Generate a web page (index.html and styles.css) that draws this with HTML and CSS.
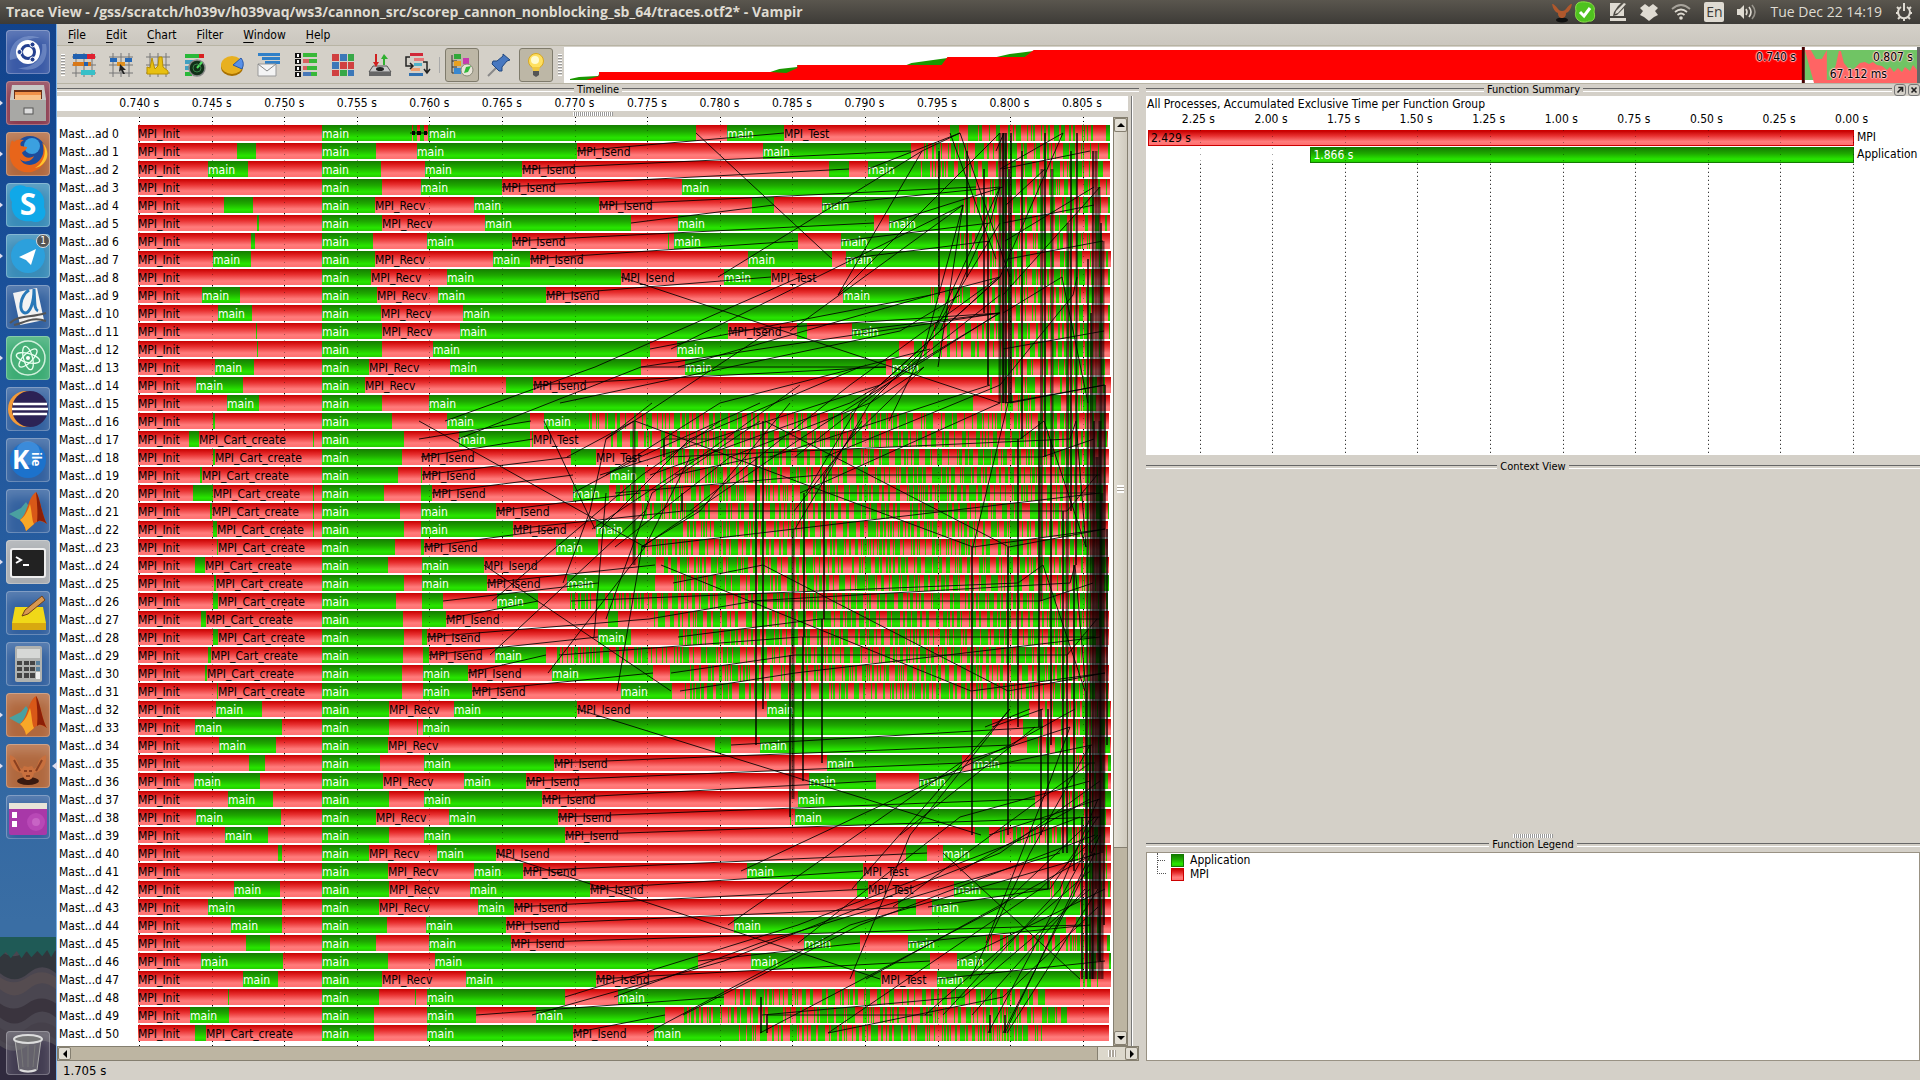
FILE: index.html
```html
<!DOCTYPE html>
<html lang="en">
<head>
<meta charset="utf-8">
<title>Trace View - Vampir</title>
<link rel="stylesheet" href="styles.css">
</head>
<body>
<header class="titlebar">
  <h1 class="title">Trace View - /gss/scratch/h039v/h039vaq/ws3/cannon_src/scorep_cannon_nonblocking_sb_64/traces.otf2* - Vampir</h1>
  <div class="tray">
    <svg class="tray-deer" viewBox="0 0 22 22"><ellipse cx="11" cy="19" rx="6" ry="2.500" fill="#111"/><path d="M1 3c2 0 4 2 6 5 1 1 2 2 4 2s3-1 4-2c2-3 4-5 6-5-1 5-3 8-6 9 0 4-2 5-4 5s-4-1-4-5c-3-1-5-4-6-9z" fill="#b0582c"/></svg>
    <svg class="tray-skype" viewBox="0 0 22 22"><path d="M4 2c3-2 9-1 12 0 4 2 5 5 4 9 2 6-1 10-5 9-4 2-9 1-11-1-3-3-3-6-2-9C1 6 2 3 4 2z" fill="#4fc21f" stroke="#8be04a"/><path d="M6 11l4 4 6-8" fill="none" stroke="#fff" stroke-width="3"/></svg>
    <svg class="tray-icon" viewBox="0 0 18 18"><path d="M1 0h11l-3 3-4 6-1 4 4-1 7-7v8H1zM15 0l2 1-8 9-3 1 1-3zM1 15h16v3H1z" fill="#dfdbd2"/></svg>
    <svg class="tray-icon" viewBox="0 0 18 18"><path d="M5 1l4 3 4-3 5 4-3 3 3 4-4 2-5 4-5-4-4-2 3-4-3-3z" fill="#dfdbd2"/></svg>
    <svg class="tray-icon wide" viewBox="0 0 20 18"><g fill="none" stroke="#dfdbd2" stroke-width="1.800"><path d="M1 6q9-8 18 0" opacity=".6"/><path d="M4 9q6-5 12 0"/><path d="M6.500 12q3.500-3 7 0"/></g><circle cx="10" cy="15" r="1.800" fill="#dfdbd2"/></svg>
    <span class="lang">En</span>
    <svg class="tray-icon wide" viewBox="0 0 20 18"><path d="M0 6h3l4-4v14l-4-4H0z" fill="#dfdbd2"/><g fill="none" stroke="#dfdbd2" stroke-width="1.600"><path d="M9 6q2 3 0 6"/><path d="M12 4q4 5 0 10"/><path d="M15 2q6 7 0 14" opacity=".5"/></g></svg>
    <time class="clock">Tue Dec 22 14:19</time>
    <svg class="tray-icon" viewBox="0 0 18 18"><g fill="none" stroke="#dfdbd2" stroke-width="2"><path d="M6 4a6 6 0 1 0 6 0"/><path d="M9 0v8M1 10h2M15 10h2M3 16l2-2M15 16l-2-2M9 16v2M2 4l2 2M16 4l-2 2"/></g></svg>
  </div>
</header>

<div class="desktop">
<nav class="launcher" aria-label="Launcher">
  <button class="tile navy" aria-label="Dash"><svg viewBox="0 0 44 44"><path d="M4 30C2 10 20 2 34 8c-12-1-24 6-22 20M40 14c4 20-12 30-28 24 16 0 26-10 24-24" fill="#8ea6d6" opacity=".5"/><circle cx="22" cy="22" r="12" fill="#fff"/><circle cx="22" cy="22" r="6.500" fill="none" stroke="#24408f" stroke-width="3"/><g fill="#24408f" stroke="#fff"><circle cx="13.500" cy="22" r="2.500"/><circle cx="26.500" cy="14.500" r="2.500"/><circle cx="26.500" cy="29.500" r="2.500"/></g></svg></button>
  <button class="tile wine run" aria-label="Files"><svg viewBox="0 0 44 44"><path d="M6 4h32l2 14v22H4V18z" fill="#c9c9c6"/><path d="M8 9h28v9H8z" fill="#6b3018"/><path d="M9 11h26v3H9z" fill="#f09048"/><path d="M9 14h26v5H9z" fill="#f8c088"/><path d="M4 19h36v21H4z" fill="#a8a8a5"/><rect x="18" y="27" width="9" height="6" fill="#ddd" stroke="#555"/></svg></button>
  <button class="tile tan run" aria-label="Firefox"><svg viewBox="0 0 44 44"><circle cx="24" cy="20" r="16" fill="#1d4c9c"/><circle cx="26" cy="14" r="8" fill="#3ba0e0"/><path d="M5 10c1-2 2-2 3 0 3-3 6-3 10-2-4 2-4 4-3 6l6 1c0 3-4 4-5 6 2 5 8 6 12 3-2 6-11 7-14 3 4 9 19 8 23-5 1-5 0-9-1-12 5 6 6 15 2 21-5 9-19 13-28 5C2 30 3 18 5 10z" fill="#e8651a"/><path d="M37 11c4 9 1 20-8 25 11-2 17-14 8-25z" fill="#ffc52e"/></svg></button>
  <button class="tile teal run" aria-label="Skype"><svg viewBox="0 0 44 44"><path d="M6 6c4-5 12-4 14-2 13 0 20 8 18 20 5 10-4 18-13 14C12 40 4 30 6 19 3 14 3 9 6 6z" fill="#10a8e8"/><text x="22" y="32" class="glyph-s">S</text></svg></button>
  <button class="tile teal run" aria-label="Telegram"><svg viewBox="0 0 44 44"><circle cx="22" cy="22" r="17" fill="#2ca0dc"/><path d="M13 23l17-8-5 16-5-5z" fill="#fff"/></svg><span class="badge">1</span></button>
  <button class="tile blue" aria-label="Xournal"><svg viewBox="0 0 44 44"><path d="M7 8l24-5 7 32-24 5z" fill="#f2f2f2"/><path d="M23 5c-9 6-11 22-4 23 5 0 9-10 9-24 1 14 0 20 4 22" fill="none" stroke="#2878b8" stroke-width="3"/><path d="M4 38c8-8 20-5 36-10M8 40c10-2 18-9 32-4" fill="none" stroke="#555" stroke-width="2"/></svg></button>
  <button class="tile green run" aria-label="Atom"><svg viewBox="0 0 44 44"><circle cx="22" cy="22" r="17" fill="#48b078" stroke="#d0f0dc" stroke-width="1.500"/><g fill="none" stroke="#e8fff0" stroke-width="1.300"><ellipse cx="22" cy="22" rx="12" ry="4.500" transform="rotate(15 22 22)"/><ellipse cx="22" cy="22" rx="12" ry="4.500" transform="rotate(75 22 22)"/><ellipse cx="22" cy="22" rx="12" ry="4.500" transform="rotate(135 22 22)"/></g><circle cx="22" cy="22" r="2" fill="#fff"/></svg></button>
  <button class="tile blue" aria-label="Eclipse"><svg viewBox="0 0 44 44"><circle cx="20" cy="22" r="18" fill="#f39a38"/><circle cx="24" cy="22" r="18" fill="#2c2255"/><path d="M7 17h34M6 22h36M7 27h34" stroke="#fff" stroke-width="2.500"/></svg></button>
  <button class="tile blue" aria-label="Kile"><svg viewBox="0 0 44 44"><circle cx="22" cy="22" r="18" fill="#1c72cc"/><circle cx="22" cy="15" r="12" fill="#5aa4e8" opacity=".5"/><text x="6" y="31" class="glyph-k">K</text><text x="14" y="-26" class="glyph-ile" transform="rotate(90)">ile</text></svg></button>
  <button class="tile blue" aria-label="MATLAB"><svg viewBox="0 0 44 44"><use href="#matlab"/></svg></button>
  <button class="tile silver run" aria-label="Terminal"><svg viewBox="0 0 44 44"><rect x="5" y="9" width="34" height="28" rx="2" fill="#222" stroke="#eee" stroke-width="2"/><path d="M10 17l5 3-5 3M17 25h6" fill="none" stroke="#fff" stroke-width="2"/></svg></button>
  <button class="tile blue" aria-label="Notes"><svg viewBox="0 0 44 44"><path d="M9 16h28l3 16v7H6v-7z" fill="#f0d818"/><path d="M6 32h34v7H6z" fill="#d8a810"/><path d="M16 25l3-6L36 5l3 4-17 14z" fill="#d89850" stroke="#704018"/></svg></button>
  <button class="tile blue" aria-label="Calculator"><svg viewBox="0 0 44 44"><rect x="9" y="4" width="27" height="36" rx="2" fill="#b0b2b0"/><rect x="11" y="7" width="23" height="9" fill="#d6d8d6"/><path d="M11 19h5v4h-5zM18 19h5v4h-5zM24 19h5v4h-5zM11 25h5v4h-5zM18 25h5v4h-5zM24 25h5v4h-5zM11 31h5v5h-5zM18 31h5v5h-5zM24 31h5v5h-5z" fill="#444"/><path d="M30 19h4v4h-4zM30 25h4v4h-4z" fill="#58809c"/><path d="M30 30h4v7h-4z" fill="#eee"/></svg></button>
  <button class="tile tan run" aria-label="MATLAB session"><svg viewBox="0 0 44 44"><use href="#matlab"/></svg></button>
  <button class="tile tan run active" aria-label="Vampir"><svg viewBox="0 0 44 44"><ellipse cx="22" cy="37" rx="11" ry="4" fill="#3a1a10"/><path d="M4 11c6 2 8 7 9 12l3 2 2-3 4 1 4-1 2 3 3-2c1-5 3-10 9-12 1 8-2 16-12 18-1 5-3 7-6 7s-5-2-6-7C6 27 3 19 4 11z" fill="#c8703e"/><path d="M8 16l6 11M36 16l-6 11M18 27h3M23 27h3M20 32h4" stroke="#8a4020" stroke-width="2"/></svg></button>
  <button class="tile blue" aria-label="Workspace"><svg viewBox="0 0 44 44"><rect x="3" y="9" width="38" height="31" rx="2" fill="#a838a8"/><circle cx="30" cy="27" r="9" fill="#c858c4" opacity=".5"/><circle cx="30" cy="27" r="4" fill="#d880d4" opacity=".5"/><path d="M3 8h38v6H3z" fill="#e8e4d8"/><path d="M6 17h5v6H6zM6 26h5v6H6z" fill="#fff"/></svg></button>
  <div class="terrain">
    <svg class="hills" viewBox="0 0 57 143" preserveAspectRatio="none"><path fill="#4a4650" d="M0 0h57v143H0z"/><path fill="#32363c" d="M0 14q14 10 28 0t29 0v22q-14-12-28 0T0 36z"/><path fill="#554c50" d="M0 40q14 10 28 0t29 0v12q-14-12-28 0T0 52z"/><path fill="#3a343e" d="M0 66q14 10 28 0t29 0v14q-14-12-28 0T0 80z"/><path fill="#45404a" d="M0 90q14 10 28 0t29 0v12q-14-12-28 0t-29 0z"/><path fill="#302a3e" d="M0 108q14 10 28 0t29 0v35H0z"/><path fill="#1f5a56" d="M0 0h57v12l-5 8-4-7-5 6-5-5-6 6-5-6-5 7-5-7-6 7-5-6-6 5z"/></svg>
    <button class="tile clear" aria-label="Trash"><svg viewBox="0 0 44 44"><path d="M9 9l4 30q9 4 18 0l4-30" fill="#888" fill-opacity=".5" stroke="#aaa"/><path d="M15 14l2 22M22 14v22M29 14l-2 22" stroke="#777"/><ellipse cx="22" cy="8" rx="14" ry="4" fill="#777" stroke="#ddd" stroke-width="2"/><path d="M14 39q8 3 16 0" stroke="#ddd" stroke-width="2" fill="none"/></svg></button>
  </div>
</nav>

<main class="app">
  <nav class="menubar">
    <button class="menu"><u>F</u>ile</button><button class="menu"><u>E</u>dit</button><button class="menu"><u>C</u>hart</button><button class="menu"><u>F</u>ilter</button><button class="menu"><u>W</u>indow</button><button class="menu"><u>H</u>elp</button>
  </nav>
  <div class="toolbar">
    <span class="grip"></span>
    <div class="tools">
      <button class="tool" aria-label="Master timeline"><svg viewBox="0 0 24 24"><use href="#grid"/><path fill="#2060b0" d="M1 1h14v5H1z"/><path fill="#e02030" d="M15 1h8v5h-8z"/><path fill="#d87818" d="M1 9h18v4H1z"/><path fill="#2060b0" d="M12 9h4v4h-4z"/><path fill="#38c0c8" d="M9 17h14v5H9z"/></svg></button>
      <button class="tool" aria-label="Process timeline"><svg viewBox="0 0 24 24"><use href="#grid"/><path fill="#2468b8" d="M1 5h7v4H1zM16 5h7v4h-7z"/><path fill="#e09020" d="M8 9h8v4H8z"/><path fill="#222" d="M11 11l6 6-3 0 2 4-2 0-2-4-2 2z"/></svg></button>
      <button class="tool" aria-label="Counter timeline"><svg viewBox="0 0 24 24"><use href="#grid"/><path fill="#e8c010" stroke="#b89000" d="M1 21V14l3 1 2-10 2 8 1 3 3-3 1-9 3 0 1 10 5 4v3z"/></svg></button>
      <button class="tool" aria-label="Performance radar"><svg viewBox="0 0 24 24"><path fill="#28b838" d="M2 1h16v4H2z"/><path fill="#d82020" d="M16 1h5v4h-5z"/><path fill="#40a0c0" d="M2 7h8v4H2zM2 13h6v4H2z"/><path fill="#28b838" d="M2 19h7v4H2z"/><circle cx="14" cy="15" r="8" fill="#123018" stroke="#888" stroke-width="1.500"/><path d="M14 15l5-6" stroke="#50e060" stroke-width="2"/><circle cx="14" cy="15" r="4" fill="none" stroke="#3a8048"/></svg></button>
      <button class="tool" aria-label="Function summary"><svg viewBox="0 0 24 24"><ellipse cx="12" cy="14" rx="11" ry="9" fill="#a87000"/><ellipse cx="12" cy="12" rx="11" ry="9" fill="#e8b020"/><path d="M13 12l8-7q4 5 1 11z" fill="#5890e8" stroke="#2858a8"/></svg></button>
      <button class="tool" aria-label="Message summary"><svg viewBox="0 0 24 24"><path fill="#3080c8" d="M1 0h22v3H1zM5 4h18v3H5zM8 8h15v3H8z"/><path fill="#f4f4f4" stroke="#999" d="M1 11h18v12H1z"/><path d="M1 11l9 7 9-7" fill="none" stroke="#888"/></svg></button>
      <button class="tool" aria-label="Process summary"><svg viewBox="0 0 24 24"><path fill="#111" d="M1 0h6v5H1zM1 6h6v5H1zM1 13h6v5H1zM1 19h6v5H1z"/><path stroke="#fff" stroke-width="2" d="M4 1v3M4 7v3M4 14v3M4 20v3"/><path fill="#38b838" d="M9 0h14v4H9zM15 6h8v4h-8zM13 13h10v4H13zM17 19h6v4h-6z"/><path fill="#d86060" d="M9 6h6v4H9zM9 13h4v4H9z"/><path fill="#4878b8" d="M9 19h8v4H9z"/></svg></button>
      <button class="tool" aria-label="Communication matrix"><svg viewBox="0 0 24 24"><path fill="#d04040" d="M1 1h7v7H1zM9 9h7v7H9zM17 9h6v7h-6zM1 17h7v6H1z"/><path fill="#3c78b8" d="M9 1h7v7H9zM1 9h7v7H1zM17 17h6v6h-6z"/><path fill="#38a848" d="M17 1h6v7h-6zM9 17h7v6H9z"/></svg></button>
      <button class="tool" aria-label="I/O summary"><svg viewBox="0 0 24 24"><path fill="#c8c8c8" stroke="#555" d="M5 13h14l4 6H1z"/><path fill="#666" d="M1 19h22v4H1z"/><path fill="#d02020" d="M7 1h2v8h2l-3 5-3-5h2z"/><path fill="#30b030" d="M17 12h-2V6h-2l3-5 4 5h-3z"/><ellipse cx="12" cy="16" rx="4" ry="2" fill="#222"/></svg></button>
      <button class="tool" aria-label="Call tree"><svg viewBox="0 0 24 24"><path fill="#d02838" d="M5 0h13v3H5z"/><path fill="#e87878" d="M9 5h10v3H9z"/><path fill="#50b0c8" d="M9 10h8v3H9z"/><path fill="#f0a070" d="M6 15h9v3H6z"/><path fill="#3070b0" d="M4 20h14v3H4z"/><path d="M5 4H1v9h6M5 10l3 3-3 3M18 9h4v10M19 16l3 4 3-4" fill="none" stroke="#222" stroke-width="1.500"/></svg></button>
    </div>
    <span class="sep"></span>
    <div class="tools">
      <button class="tool on" aria-label="Color by function"><svg viewBox="0 0 24 24"><path d="M2 2v18h5M2 8h5M2 14h5" fill="none" stroke="#333"/><path fill="#30a838" d="M4 1h7v5H4z"/><path fill="#e8a020" d="M4 8h7v5H4z"/><path fill="#3888d0" d="M4 15h7v6H4z"/><path fill="#c838b0" d="M13 5h6v6h-6z"/><circle cx="17" cy="17" r="6" fill="#e8e4d8" stroke="#887"/><path fill="#30b838" d="M14 20l2-6 5-1-3 6z"/></svg></button>
      <button class="tool" aria-label="Pin"><svg viewBox="0 0 24 24"><path d="M10 14L1 23" stroke="#888" stroke-width="2"/><path fill="#4878c0" stroke="#204880" d="M16 1l7 6-3 1-5 6v4l-3 0-7-7 1-3 4 0 6-5z"/></svg></button>
      <button class="tool on" aria-label="Highlight"><svg viewBox="0 0 24 24"><circle cx="12" cy="8" r="7.500" fill="#ffe060" stroke="#d8a820"/><circle cx="11" cy="7" r="4" fill="#fffbd0"/><path fill="#f0c840" d="M8 14h8l-1 4H9z"/><path fill="#555" d="M9 18h6v4l-3 2-3-2z"/></svg></button>
    </div>
    <span class="grip"></span>
    <div class="overview">
      <svg class="overview-plot" viewBox="0 0 1354 36" preserveAspectRatio="none">
        <path fill="#1a9600" d="M6 33V32L15 30 34 29 36 25H206L215 22 233 20 233 18H342L347 16 383 11V10H432L445 7 469 4V33z"/>
        <path fill="#f00" d="M22 33L35 29V25H206L222 26 233 21V18H377L383 10H460L469 3H1237V33z"/>
        <path fill="#70c464" d="M1239 3h113v30h-113z"/>
        <path fill="#ff6464" d="M1239 3h6l5 9h6l5-9v30h5v-5l4-10 3-14 2 0 3 12 5 6h5l6-6 5-1 4 2 4-2 4 3 5 1 5 4 3-3 4 5 4-4 4 4 3-5 5 4 3-6 4 5 3-4 4 4v16h-109z"/>
        <path fill="#400" d="M1236 0h3v36h-3z"/><path fill="#666" d="M1351 0h3v36h-3z"/>
      </svg>
      <span class="ov ov-start">0.740 s</span><span class="ov ov-end">0.807 s</span><span class="ov ov-span">67.112 ms</span>
    </div>
  </div>

  <div class="docks">
    <section class="dock-left">
      <h2 class="dock-title">Timeline</h2>
      <div class="timeline-body">
        <div class="ruler"><div class="ruler-scale" id="ruler"></div></div>
        <div class="splitter"><span class="split-grip"></span></div>
        <div class="chart-row">
          <div class="chart" id="chart">
            <div class="labels" id="labels"></div>
            <div class="tracks">
              <svg class="layer" id="grid-under" viewBox="0 0 973 929" preserveAspectRatio="none"></svg>
              <div class="bars" id="bars"></div>
              <svg class="layer over" id="messages" viewBox="0 0 973 929" preserveAspectRatio="none"></svg>
            </div>
          </div>
          <div class="vscroll"><button class="sb up" aria-label="Scroll up"></button><div class="vthumb"><span class="ridges"></span></div><div class="vrest"></div><button class="sb down" aria-label="Scroll down"></button></div>
        </div>
      </div>
      <div class="hscroll"><button class="sb left" aria-label="Scroll left"></button><div class="hrest"></div><div class="hthumb"><span class="ridges vert"></span></div><button class="sb right" aria-label="Scroll right"></button></div>
    </section>

    <section class="dock-right">
      <div class="title-wrap"><h2 class="dock-title">Function Summary</h2>
        <button class="dock-btn" aria-label="Undock"><svg viewBox="0 0 12 12"><path d="M4 3h5v5M9 3L3 9" fill="none" stroke="#222" stroke-width="2"/></svg></button>
        <button class="dock-btn" aria-label="Close"><svg viewBox="0 0 12 12"><path d="M3 3l6 6M9 3l-6 6" stroke="#222" stroke-width="2"/></svg></button></div>
      <div class="summary">
        <p class="summary-head">All Processes, Accumulated Exclusive Time per Function Group</p>
        <div class="summary-plot">
          <div class="summary-main">
            <div class="summary-scale" id="sumscale"></div>
            <div class="summary-bars">
              <div class="sumbar mpi">2.429 s</div>
              <div class="sumbar appl">1.866 s</div>
              <svg class="layer" id="sumgrid" viewBox="0 0 706 327" preserveAspectRatio="none"></svg>
            </div>
          </div>
          <div class="summary-names"><span>MPI</span><span>Application</span></div>
        </div>
      </div>
      <h2 class="dock-title context-title">Context View</h2>
      <div class="context"></div>
      <div class="legend-split"><span class="split-grip"></span></div>
      <h2 class="dock-title">Function Legend</h2>
      <ul class="legend">
        <li><span class="twig"></span><span class="swatch appl"></span>Application</li>
        <li><span class="twig last"></span><span class="swatch mpi"></span>MPI</li>
      </ul>
    </section>
  </div>
  <footer class="status">1.705 s</footer>
</main>
</div>

<svg class="defs" aria-hidden="true">
  <symbol id="grid" viewBox="0 0 24 24"><path d="M4 0v24M12 0v24M20 0v24M0 4h24M0 12h24M0 20h24" stroke="#777" fill="none"/></symbol>
  <symbol id="matlab" viewBox="0 0 44 44"><path d="M3 25l12-6 5-6 4 6-7 13-5-2z" fill="#4aa0a0"/><path d="M14 31C22 24 22 8 30 3c4 5 6 24 11 32-6-4-9-4-13 0l-8 7c-1-5-3-8-6-11z" fill="#d85818"/><path d="M30 3c4 5 6 24 11 32-5-4-8-4-10-2 1-10 0-20-1-30z" fill="#8c2008"/><path d="M20 42c-1-5-3-8-6-11 5-3 8-10 10-16 2 8 2 17 4 20z" fill="#f8a828"/></symbol>
</svg>
<script src="app.js"></script>
</body>
</html>
```
FILE: styles.css
```css
* { box-sizing: border-box; }
body {
  margin: 0; min-height: 100vh; display: flex; flex-direction: column;
  background: #d4d0c8; color: #000; overflow-x: hidden;
  font: 12px/16px "DejaVu Sans Condensed", "DejaVu Sans", "Noto Sans", sans-serif;
}
button { padding: 0; border: 0; background: none; font: inherit; color: inherit; }
h1, h2, p, ul { margin: 0; padding: 0; font-weight: normal; }
svg { display: block; }
.defs { position: absolute; width: 0; height: 0; }

/* Desktop top bar */
.titlebar { height: 24px; padding: 0 7px 0 6px; display: flex; align-items: center; justify-content: space-between; background: linear-gradient(#5a564e, #3d3b37); color: #dfdbd2; }
.title { font: bold 14px/24px "Open Sans", "Noto Sans", sans-serif; white-space: nowrap; }
.tray { display: flex; align-items: center; gap: 13px; }
.tray-deer, .tray-skype { width: 22px; height: 22px; }
.tray-skype { margin-left: -12px; }
.tray-icon { width: 18px; height: 18px; }
.tray-icon.wide { width: 20px; }
.lang { width: 20px; height: 20px; border-radius: 2px; background: #dfdbd2; color: #3d3b37; text-align: center; font: 14px/20px "Open Sans", sans-serif; }
.clock { font: 14px/24px "Open Sans", "Noto Sans", sans-serif; }

.desktop { flex: 1; display: flex; }

/* Launcher */
.launcher { flex: none; width: 57px; padding: 6px 7px 0 6px; display: flex; flex-direction: column; gap: 7px; border-right: 1px solid #7db4ea; background: linear-gradient(#12438c, #1c539c 30%, #3a6ea4 85%); }
.tile { position: relative; flex: none; width: 44px; height: 44px; border-radius: 4px; box-shadow: inset 0 0 0 1px rgba(255,255,255,.25), inset 0 8px 12px rgba(255,255,255,.2); }
.navy { background: #3a5aa6; } .wine { background: #8c3c50; } .tan { background: #b0683e; }
.teal { background: #3a8cb8; } .blue { background: #33619f; } .green { background: #3cac74; }
.silver { background: #a8acb0; }
.run::before { content: ""; position: absolute; left: -8px; top: 18px; border: 4px solid transparent; border-left: 5px solid #dde; }
.active::after { content: ""; position: absolute; right: -7px; top: 18px; border: 4px solid transparent; border-right: 5px solid #dde; }
.badge { position: absolute; right: 0; top: 0; width: 14px; height: 14px; border-radius: 7px; border: 1px solid #ddd; background: #555; color: #fff; font-size: 10px; line-height: 12px; text-align: center; }
.glyph-s { font: bold 30px "Open Sans", sans-serif; fill: #fff; text-anchor: middle; }
.glyph-k { font: bold 26px "Open Sans", sans-serif; fill: #fff; }
.glyph-ile { font: bold 12px "Open Sans", sans-serif; fill: #fff; }
.terrain { position: relative; margin: auto -7px 0 -6px; height: 144px; padding: 94px 6px 0; }
.hills { position: absolute; inset: 0; width: 100%; height: 100%; }
.clear { background: rgba(200,200,220,.12); }

/* Menus and toolbar */
.app { flex: 1; min-width: 0; display: flex; flex-direction: column; }
.menubar { height: 22px; padding-left: 1px; display: flex; border-bottom: 1px solid #b8b4a4; background: linear-gradient(#d4d0c8, #cbc7bf); }
.menu { padding: 0 10px; line-height: 23px; }
.menu u { text-underline-offset: 3px; }
.toolbar { height: 38px; padding-left: 4px; display: flex; align-items: center; gap: 5px; border-bottom: 1px solid #b8b4a4; }
.grip { flex: none; width: 4px; height: 22px; margin-right: -3px; background: repeating-linear-gradient(#fff 0 1px, #999 1px 2px, #d4d0c8 2px 3px); }
.tools { display: flex; gap: 3px; }
.tool { width: 34px; height: 34px; padding: 5px; }
.tool svg { width: 24px; height: 24px; overflow: visible; }
.tool.on { padding: 4px; border: 1px solid #7f7b6c; border-radius: 3px; background: #bdb7a6; }
.sep { width: 1px; height: 16px; background: #fff; border-left: 1px solid #aaa; }
.overview { position: relative; flex: 1; height: 36px; background: #fff; }
.overview-plot { width: 100%; height: 36px; }
.ov { position: absolute; line-height: 14px; text-shadow: 1px 0 1px #fcc, -1px 0 1px #fcc, 0 1px 1px #fcc, 0 -1px 1px #fcc; }
.ov-start { right: 124px; top: 3px; } .ov-end { right: 7px; top: 3px; } .ov-span { right: 33px; top: 20px; }

/* Docks */
.docks { flex: 1; display: flex; gap: 7px; }
.dock-left { flex: 1082 1 0; min-width: 0; display: flex; flex-direction: column; }
.dock-right { flex: 774 1 0; min-width: 0; display: flex; flex-direction: column; }
.dock-title { height: 12px; display: flex; align-items: center; gap: 3px; font-size: 11px; line-height: 12px; white-space: nowrap; }
.dock-title::before, .dock-title::after { content: ""; flex: 1; height: 2px; border-top: 1px solid #666; border-bottom: 1px solid #fff; }
.title-wrap { display: flex; align-items: center; gap: 2px; }
.title-wrap .dock-title { flex: 1; }
.title-wrap .dock-title::before { flex: 1 1 29px; }
.dock-btn { width: 12px; height: 12px; border: 1px solid #777; border-radius: 3px; }
.dock-btn svg { width: 10px; height: 10px; }

.timeline-body { margin-right: 7px; padding-right: 3px; border-right: 1px solid #777; box-shadow: 1px 0 #fff; }
.ruler { height: 15px; padding: 0 17px 0 81px; background: #fff; }
.ruler-scale { display: flex; margin-left: -35px; }
.ruler-scale span { flex: none; text-align: center; line-height: 14px; background: linear-gradient(#000, #000) 50% 13px / 1px 2px no-repeat; }
.splitter { height: 6px; display: flex; justify-content: center; align-items: center; }
.split-grip { width: 40px; height: 4px; background: repeating-linear-gradient(90deg, #fff 0 1px, #999 1px 2px); }
.chart-row { display: flex; }
.chart { flex: 1; display: flex; padding-right: 2px; background: #fff; }
.labels { flex: none; width: 81px; padding: 7px 0 4px 2px; }
.labels div { height: 18px; line-height: 20px; white-space: nowrap; }
.tracks { position: relative; flex: 1; min-width: 0; }
.layer { position: absolute; inset: 0; width: 100%; height: 100%; pointer-events: none; }
.bars { position: relative; padding: 7px 0 4px; }
.track { height: 18px; padding: 1px 0; display: flex; line-height: 18px; white-space: nowrap; }
.track span { flex: none; height: 16px; }
.r, .mpi { background: linear-gradient(#c80000, #e83030 35%, #ff7c7c 75%, #ff7070); }
.g, .appl { background: linear-gradient(#147d00, #1ea800 40%, #28e600 80%, #22cc00); color: #fff; }
.layer line, .layer path { vector-effect: non-scaling-stroke; fill: none; stroke: #000; }
.layer .tick { stroke-dasharray: 1 3; }
.layer .faint { stroke-dasharray: 1 5; opacity: .35; }
.layer .msg { opacity: .85; }
.layer .v { opacity: .7; stroke-width: 2px; }
.layer .thick { opacity: .55; stroke-width: 3px; }
.layer .arrow { stroke-width: 4px; }

/* Scroll bars */
.vscroll { width: 15px; display: flex; flex-direction: column; background: #bdb5a2; border: 1px solid #857f70; }
.sb { flex: none; width: 13px; height: 14px; background: #e2ded4; border: 1px solid #857f70; border-radius: 2px; display: grid; place-items: center; }
.sb::before { content: ""; border: 4px solid transparent; }
.up::before { border-bottom-color: #000; margin-top: -4px; }
.down::before { border-top-color: #000; margin-bottom: -4px; }
.left::before { border-right-color: #000; margin-left: -4px; }
.right::before { border-left-color: #000; margin-right: -4px; }
.vthumb { flex: 718 1 0; display: grid; place-items: center; background: linear-gradient(90deg, #e4e0d6, #cfcabd); border-bottom: 1px solid #857f70; }
.vrest { flex: 184 1 0; }
.ridges { width: 7px; height: 8px; background: repeating-linear-gradient(#fff 0 2px, #aaa49a 2px 3px); }
.ridges.vert { width: 8px; height: 7px; background: repeating-linear-gradient(90deg, #fff 0 1px, #aaa49a 1px 3px); }
.hscroll { height: 15px; display: flex; background: #bdb5a2; border: 1px solid #857f70; }
.hscroll .sb { height: 13px; }
.hrest { flex: 1; }
.hthumb { width: 28px; display: grid; place-items: center; background: #dcd8cc; border-left: 1px solid #857f70; }

/* Function summary */
.summary { background: #fff; display: flex; flex-direction: column; }
.summary-head { padding-left: 1px; height: 15px; line-height: 16px; }
.summary-plot { display: flex; padding-left: 2px; }
.summary-main { flex: 706 1 0; min-width: 0; }
.summary-scale { height: 19px; display: flex; margin-left: 2%; }
.summary-scale span { flex: none; text-align: center; line-height: 16px; }
.summary-bars { position: relative; height: 325px; display: flex; flex-direction: column; gap: 1px; align-items: flex-end; }
.sumbar { height: 16px; line-height: 14px; padding-left: 2px; border: 1px solid #c00; }
.sumbar.mpi { width: 100%; }
.sumbar.appl { width: 77%; border-color: #127a00; }
.summary-names { flex: 63 1 0; min-width: 0; padding: 18px 0 0 3px; display: flex; flex-direction: column; gap: 1px; white-space: nowrap; }
.context-title { margin-top: 6px; }
.context { flex: 1; }
.legend-split { height: 6px; display: flex; justify-content: center; align-items: center; }
.legend { height: 209px; margin-top: 1px; padding: 0 0 0 10px; list-style: none; background: #fff; border: 1px solid #999284; }
.legend li { height: 14px; display: flex; align-items: center; line-height: 14px; }
.twig { position: relative; width: 9px; height: 14px; border-left: 1px dotted #555; background: repeating-linear-gradient(90deg, #555 0 1px, transparent 1px 2px) 0 7px / 100% 1px no-repeat; }
.twig.last { height: 7px; align-self: flex-start; border-bottom: 1px dotted #555; background: none; }
.swatch { width: 13px; height: 13px; margin: 0 6px 0 5px; border: 1px solid #127a00; }
.swatch.mpi { border-color: #c00; }

.status { height: 20px; padding-left: 6px; line-height: 20px; font-size: 13px; }
```
FILE: app.js
```js
// Each row lists "<start><kind>" tokens. r = MPI, g = application, d = rapid alternation.
// m = labelled main, i = MPI_Isend, v = MPI_Recv, t = MPI_Test, c = MPI_Cart_create.
var START = 138, END = 1111, WIDTH = END - START;
var NAMES = { m: 'main', i: 'MPI_Isend', v: 'MPI_Recv', t: 'MPI_Test', c: 'MPI_Cart_create', n: 'MPI_Init' };
var ROWS = [
  '322m 411d 429m 696r 727m 784t 950g 959r 968g 975d',
  '237g 256r 322m 376r 417m 577i 763m 911r 922d',
  '208m 248r 322m 381r 425m 522i 829g 849r 868m 919d',
  '322m 382r 421m 502i 682m 976r 985d',
  '224g 253r 322m 375v 474m 599i 752g 774r 822m 962d',
  '257g 259r 322m 382v 485m 631r 678m 874r 889m 982d',
  '251g 255r 322m 373r 427m 512i 668g 669r 674m 798r 841m 954d',
  '213m 251r 322m 375v 493m 530i 748m 832r 846m 978r 984d',
  '322m 371v 447m 621i 724m 771t 990d',
  '202m 240r 322m 377v 438m 546i 843m 931d',
  '218m 252r 322m 381v 463m 948r 990d',
  '256g 257r 322m 382v 460m 728i 797g 807r 852m 934d',
  '257g 258r 322m 382r 433m 650r 677m 899r 914g 920d',
  '215m 254r 322m 369v 450m 641r 685m 886r 892m 1010d',
  '196m 243r 322m 365v 506g 533i 990d',
  '227m 259r 322m 382r 429m 973r 1000d',
  '213g 215r 322m 392r 447m 530r 544m 586d',
  '189g 199c 313g 314r 322m 404r 459m 530r 532g 533t 604d',
  '213g 215c 322m 402r 421i 571g 596t 660d',
  '200g 202c 322m 398r 421g 422i 610m 645r 659d',
  '193g 213c 313g 314r 322m 384r 421g 432i 573m 609r 616d',
  '210g 212c 313g 314r 322m 400r 421m 496i 640d',
  '213g 217c 313g 314r 322m 404r 421m 513i 596m 683r 687d',
  '217g 218c 322m 395r 421g 424i 556m 598r 630d',
  '195g 205c 322m 388r 422m 484i 638g 655d',
  '214g 216c 322m 404r 422m 487i 567m 655r 673d',
  '213g 218c 322m 396r 422g 443r 497m 538r 570d',
  '201g 206c 322m 403r 422g 446i 608g 618r 649d',
  '213g 218c 322m 404r 422g 427i 598m 631r 679d',
  '208g 211c 322m 403r 423g 429i 495m 546r 551d',
  '205g 207c 322m 402r 423m 468i 552m 653r 670g 689d',
  '217g 218c 322m 402r 423m 472i 621m 672r 680d',
  '216m 262r 322m 389v 454m 577i 767m 1029r 1045d',
  '195m 282r 322m 389r 417g 418r 423m 992r 1023g 1043r 1060d',
  '219m 276r 322m 388v 715g 731r 760m 1011r 1027g 1037d',
  '249g 265r 322m 380r 424m 554i 827m 962r 973m 1075d',
  '194m 260r 322m 383v 464m 526i 809m 876r 919m 1080d',
  '228m 273r 322m 389r 424m 542i 798m 1035r 1058d',
  '196m 281r 322m 376v 449m 558i 790g 791r 795m 1083d',
  '225m 268r 322m 389r 424m 565i 975g 989r 996d',
  '278g 282r 322m 369v 437m 496i 906g 927r 943m 1071d',
  '322m 388v 474m 523i 747m 863t 1081d',
  '234m 280r 322m 389v 470m 590i 857g 868t 954m 1048d',
  '208m 282r 322m 379v 478m 514i 898g 916r 932m 1080d',
  '231m 282r 322m 387r 426m 506i 734m 1066r 1076g 1082d',
  '246g 270r 322m 376r 429m 511i 804m 860r 908m 986d',
  '201m 283r 322m 388r 435m 698r 751m 930r 957m 1083d',
  '243m 278r 322m 382v 466m 596i 855g 881t 937m 1080d 1104r',
  '228g 229r 322m 379r 415g 416r 427m 565r 618m 724r 735d 1048r',
  '190m 229r 322m 374r 427m 476r 536m 665r 683d 1075r',
  '195g 206c 322m 374r 427m 573i 654m 737d 1044r'
];

// Messages as polylines of "x,row" points.
var MESSAGES = [
  '577,1 784,0', '522,2 911,1', '502,3 849,2', '599,4 976,3', '631,5 774,4', '512,6 874,5', '530,7 798,6',
  '621,8 1000,15', '546,9 771,8', '696,0 832,7', '868,2 960,0', '718,8 922,1 960,0', '838,9 922,1', '822,4 1000,3', '889,5 1003,3',
  '841,6 990,5 1000,3', '845,7 990,6', '671,12 963,4', '790,11 963,4', '728,11 1000,10', '650,12 931,9', '641,13 886,13', '678,13 931,9 1000,8',
  '533,14 886,13', '641,13 1000,10', '852,11 1000,10', '838,9 1000,0', '950,0 996,7', '960,0 1010,8', '889,16 924,12 963,4', '938,13 963,4',
  '925,12 1000,3', '934,11 1000,5', '940,11 988,5', '445,16 595,13 800,8', '458,17 641,13', '419,17 531,16', '421,18 533,17', '422,19 571,18',
  '432,20 573,19', '496,21 640,20', '513,22 683,21', '424,23 556,22', '487,25 655,24', '443,26 598,25', '446,27 538,26', '427,28 649,27',
  '429,29 598,28', '468,30 546,29', '472,31 653,30', '419,16 645,23', '544,16 595,22', '484,24 671,31', '492,26 642,19 720,16',
  '490,29 645,21', '548,30 645,23 690,18', '606,27 652,20 760,16', '617,31 642,23', '594,28 606,20', '563,25 590,21 606,17 634,16',
  '567,18 634,16 770,11', '606,17 652,15', '606,19 720,15 930,12', '600,22 690,17 860,13', '615,23 730,18 870,15 924,13', '641,23 700,21 790,15',
  '573,20 640,18 760,15', '592,22 700,18 800,14', '642,23 800,17 999,10', '690,21 850,14 999,8', '795,22 870,15 924,12', '794,21 850,17 924,13',
  '806,20 860,15 1000,8', '824,19 862,16', '795,18 1000,9', '825,18 1000,14', '800,20 1000,15', '770,18 990,14', '560,15 900,11 960,9',
  '600,19 880,14 1000,8', '650,19 850,15 1000,10', '635,16 973,23 1105,22', '765,16 1009,23 1105,22', '661,24 971,31 1105,30', '763,24 1008,31 1105,30',
  '1008,15 973,23', '664,17 1020,17 1044,16 1086,23', '669,18 1070,17 1076,16 1086,23', '675,19 757,18 1042,18 1094,17', '615,20 820,19 1100,19',
  '809,20 1095,20', '683,21 794,21 1067,21 1097,19', '642,23 794,22 1100,20', '673,25 763,24', '571,26 1018,25 1043,24 1085,31', '750,26 1070,25 1075,24 1086,31',
  '649,27 755,26 1040,26 1093,25', '678,28 820,27 1100,27', '559,29 800,28 1095,28', '671,30 795,29 1067,29 1097,27', '680,31 795,30 1100,28',
  '577,32 981,39', '992,33 1043,32', '731,34 1043,33', '554,35 1011,34', '526,36 962,35', '542,37 876,36', '558,38 1035,37', '565,39 1100,38',
  '496,40 880,47', '523,41 927,40', '590,42 863,41', '514,43 868,42', '506,44 916,43', '511,45 1082,44', '698,46 860,45', '596,47 930,46',
  '476,49 724,48', '573,50 665,49', '741,41 1010,34 1075,32', '852,42 1010,32', '728,44 960,35 1070,33', '985,33 1030,32', '943,40 1080,47',
  '973,35 1095,35', '919,36 1092,34', '989,39 1100,37', '893,43 1090,35', '798,45 960,38 1090,36', '850,47 910,39 1010,32', '900,39 1035,33',
  '532,49 724,46 1000,40 1100,36', '565,48 798,44 1080,38', '614,48 760,45 1060,40', '683,49 860,44 1095,39', '647,50 850,44 1100,40',
  '760,50 1000,43 1095,38', '828,50 1040,42 1098,39', '762,49 963,48 1090,42', '828,50 1003,48 1098,43', '767,49 932,49', '943,49 1060,42 1098,37',
  '972,49 1085,42', '925,49 1090,41', '988,50 1085,40', '1003,50 1095,40', '1005,50 1100,39', '1007,50 1098,42', '957,46 1105,42', '937,47 1105,46',
  '960,41 1090,37', '954,42 1050,42 1098,38', '986,45 1050,36 1070,33', '970,47 1030,40 1090,34', '908,45 1090,44', '928,43 1048,42', '866,47 1095,40',
  '1000,2 1063,0', '1000,8 1063,0', '1002,2 1090,1', '1006,4 1045,2', '1005,6 1094,3', '1008,7 1103,6', '1003,9 1100,3', '1003,12 1104,11', '1005,15 1105,14',
  '1003,10 1062,8 1088,15', '1000,14 1073,9 1077,8', '1010,15 1104,14', '996,1 1004,0', '1003,5 1094,4'
];

// Near-vertical bundles: x, first row, last row, thickness class.
var BUNDLES = [
  [939,1,9,'v'],[967,1,8,'v'],[984,2,10,'v'],[988,6,14,'v'],[1000,0,15,'thick'],[1003,0,15,'v'],[1004,0,15,'thick'],[1006,0,15,'v'],[1009,2,15,'v'],[1011,0,15,'v'],
  [1022,1,17,'v'],[1018,17,33,'v'],[1042,2,26,'thick'],[1045,0,18,'v'],[1052,2,18,'thick'],[1039,16,33,'v'],[1051,17,34,'v'],[1071,1,21,'v'],[1068,5,29,'thick'],[1077,0,24,'v'],[1074,24,41,'v'],
  [972,23,39,'v'],[1008,23,39,'v'],[634,16,24,'thick'],[664,17,18,'v'],[682,20,21,'v'],[756,18,34,'v'],[763,16,32,'v'],[793,22,37,'thick'],[790,29,38,'v'],[804,20,28,'v'],[803,28,36,'v'],[824,19,27,'v'],[822,27,35,'v'],
  [1063,21,40,'v'],[1067,29,40,'v'],[1041,32,39,'v'],[1048,32,42,'v'],[761,48,50,'v'],[767,49,50,'v'],[990,49,50,'v'],[1005,49,50,'v'],
  [1088,7,47,'v'],[1091,10,40,'v'],[1093,1,47,'v'],[1096,1,47,'thick'],[1099,3,46,'thick'],[1101,5,46,'v'],[1103,6,47,'thick'],[1105,14,44,'v'],
  [1094,16,47,'v'],[1097,18,42,'thick'],[1100,16,47,'thick'],[1102,20,40,'thick'],[1107,22,34,'v'],[1086,31,47,'v'],[1082,38,47,'v'],[1090,34,47,'v']
];

var seed = 7;
function random() { seed = (seed * 16807) % 2147483647; return seed / 2147483647; }

function addSegment(track, from, to, kind, label) {
  var s = document.createElement('span');
  s.className = kind;
  s.style.width = (to - from) / WIDTH * 100 + '%';
  if (label) s.textContent = label;
  track.appendChild(s);
}

var labels = document.getElementById('labels'), bars = document.getElementById('bars');
ROWS.forEach(function (spec, index) {
  var name = document.createElement('div');
  name.textContent = (index < 10 ? 'Mast...ad ' : 'Mast...d ') + index;
  labels.appendChild(name);
  var track = document.createElement('div');
  track.className = 'track';
  var parts = ('138n ' + spec).split(' ').map(function (t) { return [parseInt(t, 10), t.slice(-1)]; });
  parts.forEach(function (p, i) {
    var end = i + 1 < parts.length ? parts[i + 1][0] : END, kind = p[1];
    if (kind === 'd') {
      var x = p[0], green = index % 2 === 0;
      while (x < end) {
        var w = Math.min(end - x, 1 + Math.floor(random() * random() * 9));
        if (x > 1090 && !green) w = Math.min(end - x, w + 5);
        addSegment(track, x, x + w, green ? 'g' : 'r');
        green = !green; x += w;
      }
    } else {
      addSegment(track, p[0], end, kind === 'm' || kind === 'g' ? 'g' : 'r', NAMES[kind]);
    }
  });
  bars.appendChild(track);
});

function line(x1, y1, x2, y2, cls) {
  return '<line x1="' + x1 + '" y1="' + y1 + '" x2="' + x2 + '" y2="' + y2 + '" class="' + cls + '"/>';
}
function rowY(r) { return 16 + 18 * r; }

var under = '', over = '', ruler = '';
for (var i = 0; i < 14; i++) {
  var x = Math.round(1 + 72.6 * i) + 0.5;
  under += line(x, 0, x, 929, 'tick');
  over += line(x, 7, x, 925, 'faint');
  ruler += '<span style="width:' + 72.6 / 1009 * 100 + '%">' + (0.74 + i * 0.005).toFixed(3) + ' s</span>';
}
MESSAGES.forEach(function (m) {
  over += '<path class="msg" d="M' + m.split(' ').map(function (p) {
    var q = p.split(',');
    return (q[0] - START) + ' ' + rowY(+q[1]);
  }).join('L') + '"/>';
});
BUNDLES.forEach(function (b) { over += line(b[0] - START, rowY(b[1]), b[0] - START - (b[2] - b[1] > 20 ? 1 : 0), rowY(b[2]), b[3]); });
over += line(272, 16, 290, 16, 'msg') + line(274, 16, 277, 16, 'arrow') + line(279, 16, 283, 16, 'arrow') + line(286, 16, 289, 16, 'arrow');
document.getElementById('grid-under').innerHTML = under;
document.getElementById('messages').innerHTML = over;
document.getElementById('ruler').innerHTML = ruler;

var grid = '', scale = '';
for (var k = 9; k >= 0; k--) {
  var gx = 705.5 - Math.round(72.6 * k);
  grid += line(gx, 0, gx, 34, 'faint') + line(gx, 34, gx, 327, 'tick');
  scale += '<span style="width:' + 72.6 / 692 * 100 + '%">' + (k * 0.25).toFixed(2) + ' s</span>';
}
document.getElementById('sumgrid').innerHTML = grid;
document.getElementById('sumscale').innerHTML = scale;
```
